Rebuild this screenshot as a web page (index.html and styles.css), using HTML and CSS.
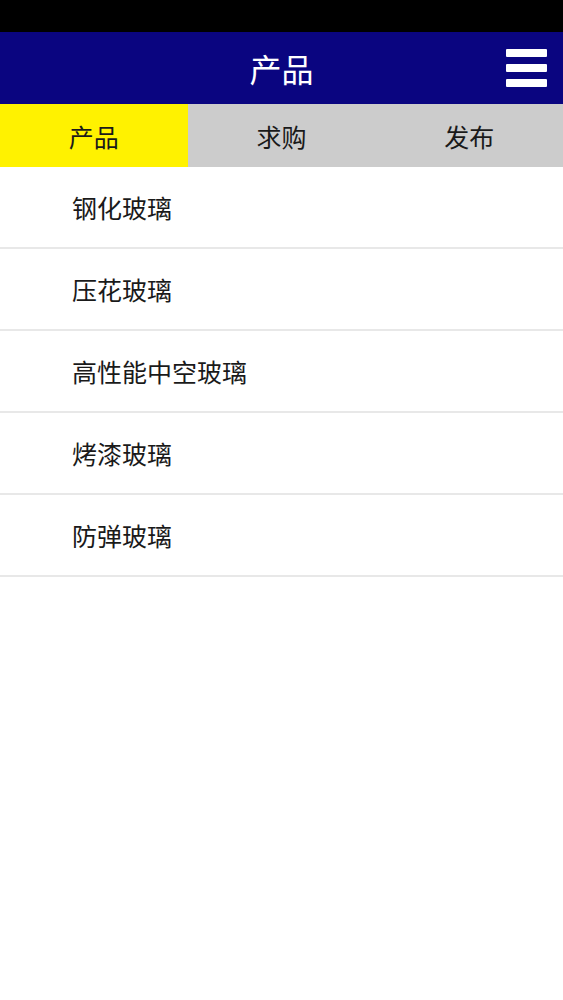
FILE: index.html
```html
<!DOCTYPE html>
<html lang="zh">
<head>
<meta charset="utf-8">
<title>产品</title>
<link rel="stylesheet" href="styles.css">
</head>
<body>
<div class="statusbar"></div>
<header class="header">
  <h1 class="title">产品</h1>
  <button class="menu" aria-label="菜单">
    <span class="bar"></span>
    <span class="bar"></span>
    <span class="bar"></span>
  </button>
</header>
<nav class="tabs">
  <div class="tab active">产品</div>
  <div class="tab">求购</div>
  <div class="tab">发布</div>
</nav>
<ul class="list">
  <li class="item">钢化玻璃</li>
  <li class="item">压花玻璃</li>
  <li class="item">高性能中空玻璃</li>
  <li class="item">烤漆玻璃</li>
  <li class="item">防弹玻璃</li>
</ul>
</body>
</html>
```
FILE: styles.css
```css
* { box-sizing: border-box; }
html, body {
  margin: 0;
  padding: 0;
  background: #ffffff;
  font-family: "Noto Sans CJK SC", "Noto Sans", sans-serif;
  color: #1a1a1a;
}
.statusbar {
  height: 32px;
  background: #000000;
}
.header {
  height: 72px;
  background: #0a0580;
  display: flex;
  align-items: center;
  justify-content: center;
  position: relative;
}
.title {
  margin: 0;
  font-size: 32px;
  font-weight: 400;
  color: #ffffff;
  line-height: 1;
}
.menu {
  position: absolute;
  right: 16px;
  top: 17px;
  width: 41px;
  height: 38px;
  padding: 0;
  border: 0;
  background: transparent;
  display: flex;
  flex-direction: column;
  justify-content: space-between;
}
.bar {
  display: block;
  height: 8px;
  background: #ffffff;
  border-radius: 1px;
}
.tabs {
  display: grid;
  grid-template-columns: repeat(3, 1fr);
  height: 63px;
  background: #cccccc;
}
.tab {
  display: flex;
  align-items: center;
  justify-content: center;
  font-size: 25px;
  color: #1a1a1a;
}
.tab.active {
  background: #fff200;
}
.list {
  list-style: none;
  margin: 0;
  padding: 0;
}
.item {
  height: 82px;
  display: flex;
  align-items: center;
  padding-left: 72px;
  font-size: 25px;
  color: #1a1a1a;
  border-bottom: 2px solid #e8e8e8;
}
```
